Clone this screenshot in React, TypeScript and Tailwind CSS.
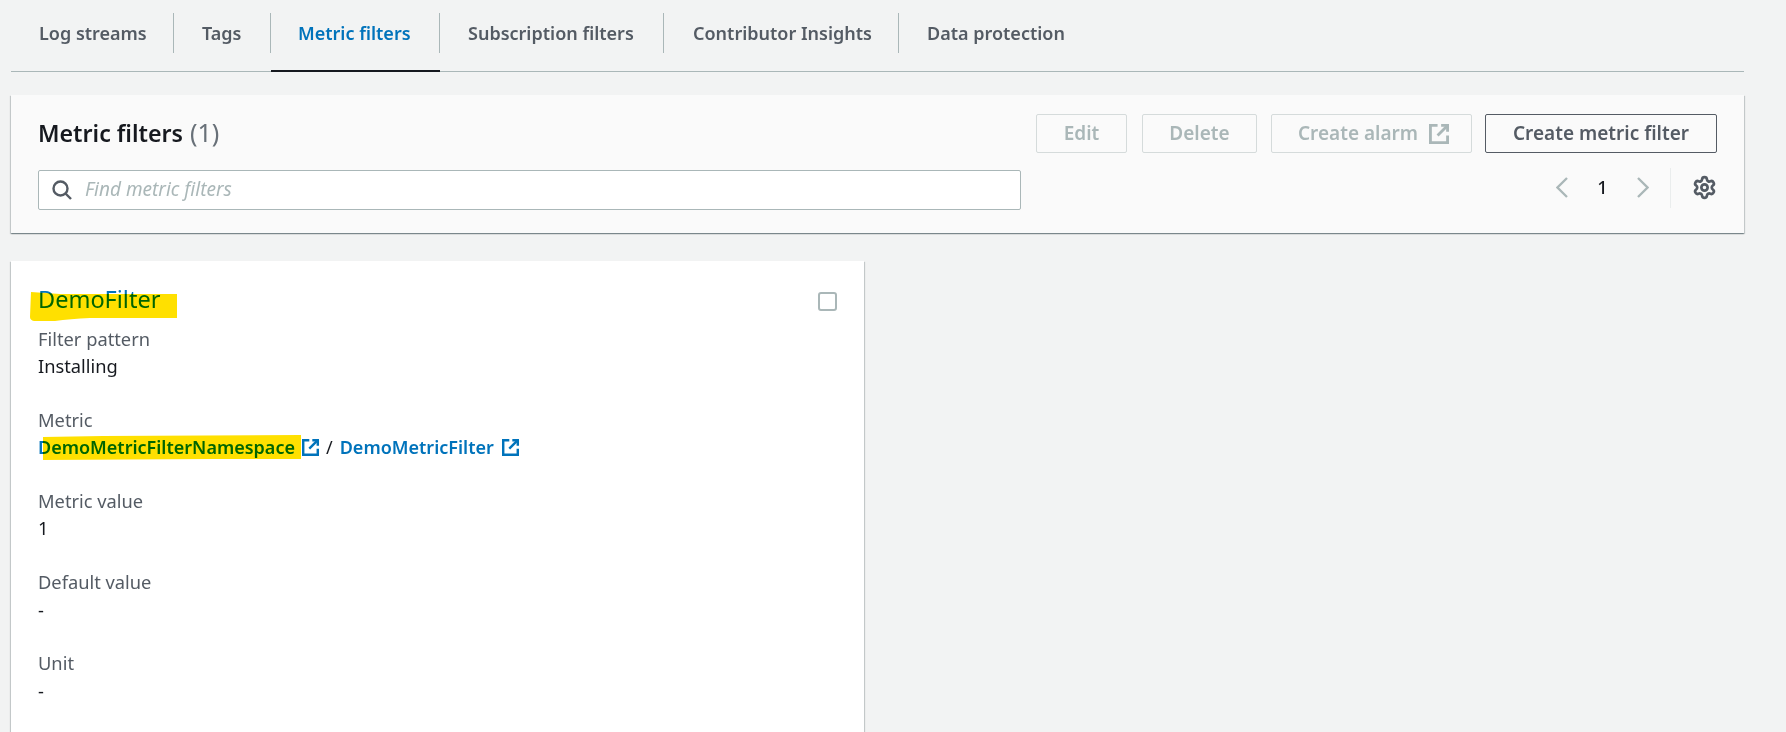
import { Settings } from 'lucide-react';

const tabs = [
  { label: 'Log streams', width: 'w-[163px] pl-[28px]' },
  { label: 'Tags', width: 'w-[97px] pl-[28px]' },
  { label: 'Metric filters', width: 'w-[169px] pl-[27px]' },
  { label: 'Subscription filters', width: 'w-[224px] pl-[28px]' },
  { label: 'Contributor Insights', width: 'w-[235px] pl-[29px]' },
  { label: 'Data protection', width: 'w-[200px] pl-[28px]' },
];

function ExternalIcon({ className }: { className: string }) {
  return (
    <svg viewBox="1 1 14 14" fill="none" stroke="currentColor" strokeWidth="2" className={className}>
      <path d="M7 2H2v12h12V9" />
      <path d="M9.5 2H14v4.5" />
      <path d="M14 2 7 9" />
    </svg>
  );
}

function Field({ label, children }: { label: string; children: React.ReactNode }) {
  return (
    <div className="h-[81px]">
      <div className="h-[27px] leading-[27px] text-[#545b64]">{label}</div>
      <div className="h-[27px] leading-[27px] text-[#16191f]">{children}</div>
    </div>
  );
}

export default function App() {
  return (
    <div className="w-[1786px] h-[732px] overflow-hidden bg-[#f2f3f3] text-[18.2px] font-['Noto_Sans',sans-serif]">
      <div className="ml-[11px] w-[1733px]">
        <nav className="flex h-[72px] border-b border-[#aab7b8] text-[18px]">
          {tabs.map((t, i) => (
            <div
              key={t.label}
              className={`h-[72px] pt-[13px] border-b-2 ${t.label === 'Metric filters' ? 'border-[#16191f] text-[#0073bb]' : 'border-transparent text-[#545b64]'}`}
            >
              <div className={`flex h-[40px] items-center font-semibold ${t.width} ${i < tabs.length - 1 ? 'border-r border-[#aab7b8]' : ''}`}>{t.label}</div>
            </div>
          ))}
        </nav>

        <div className="mt-[23px] h-[138px] bg-[#fafafa] pt-[19px] pl-[27px] pr-[27px] shadow-[0_1px_1px_0_rgba(0,28,36,0.3),1px_1px_1px_0_rgba(0,28,36,0.15),-1px_1px_1px_0_rgba(0,28,36,0.15)]">
          <div className="flex h-[39px] items-center justify-between">
            <h1 className="pb-[2px] text-[23.2px] font-semibold text-[#16191f]">
              Metric filters <span className="ml-[1px] text-[25px] font-normal text-[#687078]">(1)</span>
            </h1>
            <div className="flex items-center text-[19px] font-semibold">
              <button className="h-[39px] w-[91px] rounded-[2px] border border-[#d5dbdb] text-[#aab7b8]">Edit</button>
              <button className="ml-[15px] h-[39px] w-[115px] rounded-[2px] border border-[#d5dbdb] text-[#aab7b8]">Delete</button>
              <button className="ml-[14px] flex h-[39px] w-[201px] items-center justify-center gap-[11px] rounded-[2px] border border-[#d5dbdb] pl-[4px] text-[#aab7b8]">
                Create alarm
                <ExternalIcon className="size-[20px]" />
              </button>
              <button className="ml-[13px] h-[39px] w-[232px] rounded-[2px] border border-[#545b64] text-[#545b64]">Create metric filter</button>
            </div>
          </div>
          <div className="mt-[17px] flex h-[40px] items-center justify-between">
            <div className="flex h-[40px] w-[983px] items-center rounded-[2px] border border-[#aab7b8] bg-white pl-[13px]">
              <svg viewBox="0 0 20 20" fill="none" stroke="#545b64" strokeWidth="2.4" className="size-[20px]">
                <circle cx="8.5" cy="8.5" r="7" />
                <path d="m13.5 13.5 5.5 5.5" />
              </svg>
              <span className="ml-[13px] pb-[2px] text-[19px] italic text-[#aab7b8]">Find metric filters</span>
            </div>
            <div className="mb-[5px] flex items-center">
              <svg viewBox="0 0 12 21" fill="none" stroke="#aab7b8" strokeWidth="2.3" className="h-[21px] w-[12px]">
                <path d="M11 1 1.5 10.5 11 20" />
              </svg>
              <span className="w-[69px] text-center font-medium text-[#16191f]">1</span>
              <svg viewBox="0 0 12 21" fill="none" stroke="#aab7b8" strokeWidth="2.3" className="h-[21px] w-[12px]">
                <path d="m1 1 9.5 9.5L1 20" />
              </svg>
              <div className="ml-[21px] flex h-[40px] items-center border-l border-[#eaeded] pl-[21px]">
                <Settings className="size-[25px] text-[#545b64]" strokeWidth={2.6} />
              </div>
            </div>
          </div>
        </div>

        <div className="relative mt-[28px] h-[480px] w-[853px] bg-white pl-[27px] pt-[25px] shadow-[0_1px_1px_0_rgba(0,28,36,0.3),1px_1px_1px_0_rgba(0,28,36,0.15),-1px_1px_1px_0_rgba(0,28,36,0.15)]">
          <div className="flex h-[28px] items-center justify-between pr-[27px]">
            <span className="text-[23.5px] text-[#0073bb]">DemoFilter</span>
            <span className="mt-[3px] size-[19px] rounded-[3px] border-2 border-[#aab7b8] bg-white" />
          </div>
          <div className="mt-[11px] text-[18.3px]">
            <Field label="Filter pattern">Installing</Field>
            <Field label="Metric">
              <span className="flex items-center pt-[1px] text-[18px] font-semibold text-[#0073bb]">
                DemoMetricFilterNamespace
                <ExternalIcon className="ml-[7px] size-[17px]" />
                <span className="mx-[7px] font-normal text-[#16191f]">/</span>
                DemoMetricFilter
                <ExternalIcon className="ml-[8px] size-[17px]" />
              </span>
            </Field>
            <Field label="Metric value">1</Field>
            <Field label="Default value"><div className="pt-[1px]">-</div></Field>
            <Field label="Unit"><div className="pt-[1px]">-</div></Field>
          </div>
          <svg viewBox="0 0 147 29" preserveAspectRatio="none" className="absolute left-[19px] top-[31px] h-[29px] w-[147px] mix-blend-multiply">
            <path d="M1 0 30 2 147 2v24H60Q40 27 25 29L4 29Q0 28 0 25Z" fill="#ffe000" />
          </svg>
          <svg viewBox="0 0 258 25" preserveAspectRatio="none" className="absolute left-[32px] top-[174px] h-[25px] w-[258px] mix-blend-multiply">
            <path d="M0 2 60 1 258 0v24H170L0 25Z" fill="#ffe000" />
          </svg>
        </div>
      </div>
    </div>
  );
}
